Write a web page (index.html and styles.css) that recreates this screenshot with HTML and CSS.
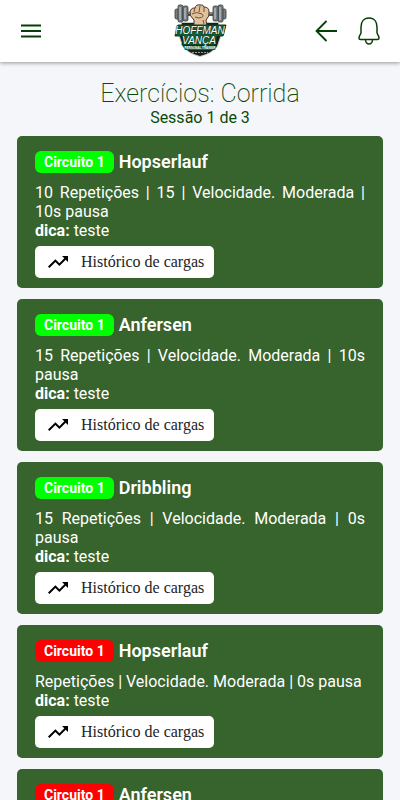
FILE: index.html
```html
<!DOCTYPE html>
<html lang="pt-BR">
<head>
<meta charset="utf-8">
<meta name="viewport" content="width=device-width, initial-scale=1">
<title>Exercícios: Corrida</title>
<link rel="stylesheet" href="styles.css">
</head>
<body>
<svg class="defs" aria-hidden="true">
  <symbol id="trend" viewBox="0 0 24 24"><path d="M16 6l2.29 2.29-4.88 4.88-4-4L2 16.59 3.41 18l6-6 4 4 6.3-6.29L22 12V6z" fill="currentColor"/></symbol>
</svg>
<header class="topbar">
  <div class="side">
    <button class="icon-button" type="button" aria-label="Menu">
      <svg width="24" height="24" viewBox="0 0 24 24" fill="none" stroke="currentColor" stroke-width="2"><path d="M2 6.500h20M2 12h20M2 17.500h20"/></svg>
    </button>
  </div>
  <svg class="logo" viewBox="0 0 56 56" role="img" aria-label="Hoffman Vança Personal Trainer">
    <path d="M10 20H46L48 34L45 43Q40 50 28 53Q16 50 11 43L8 34Z" fill="#17201b" stroke="#c9cecb" stroke-width="2"/>
    <path d="M10 20H46L48 34L45 43Q40 50 28 53Q16 50 11 43L8 34Z" fill="#17201b"/>
    <path d="M7 11h42" stroke="#555" stroke-width="4"/>
    <path d="M8 10h40" stroke="#bbb" stroke-width="1"/>
    <g fill="#777d80" stroke="#34393b" stroke-width=".8">
      <rect x="3" y="6" width="4" height="10" rx="1.500"/><rect x="6" y="2" width="5" height="17" rx="1.500"/><rect x="11" y="3" width="5" height="15" rx="1.500"/>
      <rect x="50" y="6" width="4" height="10" rx="1.500"/><rect x="46" y="2" width="5" height="17" rx="1.500"/><rect x="41" y="3" width="5" height="15" rx="1.500"/>
    </g>
    <path d="M8 4v13M13 5v11M43 5v11M48 4v13" stroke="#d2d6d7"/>
    <path d="M22 23L22 17Q17 13 18 8Q20 4 23 5Q24 1 28 2Q31 1 32 4Q37 4 37 9Q38 13 34 17L35 23Z" fill="#dfc19c" stroke="#4c3424"/>
    <path d="M23 5L22 9M28 3L27 9M32 4L32 9M20 11Q24 8 30 11Q33 14 27 15L23 14M31 17L32 21" fill="none" stroke="#735039"/>
    <path d="M6 22H54L51 33H45L43 42H10L12 33H3Z" fill="#155f37" stroke="#0c3a22"/>
    <text class="logo-name" x="28" y="31" text-anchor="middle">HOFFMAN</text>
    <text class="logo-name" x="27" y="41" text-anchor="middle">VANÇA</text>
    <path d="M11 43H45L43 47H13Z" fill="#12683b"/>
    <text class="logo-small" x="28" y="46" text-anchor="middle">PERSONAL TRAINER</text>
    <path d="M20 49.500H36" stroke="#9aa09c" stroke-dasharray="2 1"/>
  </svg>
  <div class="side side-end">
    <button class="icon-button" type="button" aria-label="Voltar">
      <svg width="24" height="24" viewBox="0 0 24 24" fill="none" stroke="currentColor" stroke-width="1.800"><path d="M12.500 2L2.500 12l10 10M2.500 12H23"/></svg>
    </button>
    <button class="icon-button" type="button" aria-label="Notificações">
      <svg width="24" height="30" viewBox="0 0 24 30" fill="none" stroke="currentColor" stroke-width="1.500" stroke-linejoin="round"><path d="M12 2C6.500 2 4 6 4 11v5.500c0 2-2 3-2 5.500 0 1 .5 1.500 1.500 1.500h17c1 0 1.500-.5 1.500-1.500 0-2.500-2-3.500-2-5.500V11c0-5-2.500-9-8-9zM8.500 23.500c0 2.500 1.500 4.500 3.500 4.500s3.500-2 3.500-4.500"/></svg>
    </button>
  </div>
</header>
<main class="content">
  <h1 class="title">Exercícios: Corrida</h1>
  <p class="session">Sessão 1 de 3</p>
  <div class="cards">
    <article class="card">
      <h2 class="card-title"><span class="badge done">Circuito 1</span>Hopserlauf</h2>
      <p class="details">10 Repetições | 15 | Velocidade. Moderada | 10s pausa</p>
      <p class="details"><b>dica:</b> teste</p>
      <button class="history" type="button"><svg class="trend"><use href="#trend"/></svg>Histórico de cargas</button>
    </article>
    <article class="card">
      <h2 class="card-title"><span class="badge done">Circuito 1</span>Anfersen</h2>
      <p class="details">15 Repetições | Velocidade. Moderada | 10s pausa</p>
      <p class="details"><b>dica:</b> teste</p>
      <button class="history" type="button"><svg class="trend"><use href="#trend"/></svg>Histórico de cargas</button>
    </article>
    <article class="card">
      <h2 class="card-title"><span class="badge done">Circuito 1</span>Dribbling</h2>
      <p class="details">15 Repetições | Velocidade. Moderada | 0s pausa</p>
      <p class="details"><b>dica:</b> teste</p>
      <button class="history" type="button"><svg class="trend"><use href="#trend"/></svg>Histórico de cargas</button>
    </article>
    <article class="card">
      <h2 class="card-title"><span class="badge pending">Circuito 1</span>Hopserlauf</h2>
      <p class="details">Repetições | Velocidade. Moderada | 0s pausa</p>
      <p class="details"><b>dica:</b> teste</p>
      <button class="history" type="button"><svg class="trend"><use href="#trend"/></svg>Histórico de cargas</button>
    </article>
    <article class="card">
      <h2 class="card-title"><span class="badge pending">Circuito 1</span>Anfersen</h2>
    </article>
  </div>
</main>
</body>
</html>
```
FILE: styles.css
```css
* { box-sizing: border-box; }
body {
  margin: 0;
  background: #f5f6fa;
  color: #0b4a0b;
  font: 16px/19px Roboto, sans-serif;
}
h1, h2, p { margin: 0; }
.defs { position: absolute; width: 0; height: 0; }
.topbar {
  display: flex;
  align-items: center;
  height: 62px;
  padding: 0 19px;
  background: #fff;
  box-shadow: 0 1px 4px rgba(0, 0, 0, .4);
}
.side { display: flex; flex: 1; align-items: center; }
.side-end { justify-content: flex-end; gap: 19px; }
.icon-button {
  display: flex;
  padding: 0;
  border: 0;
  background: none;
  color: #063f06;
}
.logo { width: 56px; height: 56px; }
.logo-name {
  fill: #fff;
  stroke: #0c3a22;
  stroke-width: 1px;
  paint-order: stroke;
  font: italic 10px "Liberation Sans", sans-serif;
}
.logo-small { fill: #fff; font: 700 3px "Liberation Sans", sans-serif; }
.content { padding: 18px 17px 0; text-align: center; }
.title { font-size: 25px; font-weight: 200; line-height: 28px; }
.cards {
  display: flex;
  flex-direction: column;
  gap: 11px;
  margin-top: 9px;
  text-align: left;
}
.card {
  padding: 15px 18px 10px;
  border-radius: 5px;
  background: #37632d;
  color: #fff;
}
.card-title {
  display: flex;
  align-items: center;
  gap: 5px;
  margin-bottom: 10px;
  font-size: 18px;
  font-weight: 600;
  line-height: 22px;
}
.badge {
  padding: 0 9px;
  border-radius: 6px;
  font-size: 14px;
  font-weight: 700;
}
.done { background: #0f0; }
.pending { background: #f00; }
.details { text-align: justify; }
.history {
  display: flex;
  align-items: center;
  gap: 11px;
  margin-top: 6px;
  height: 32px;
  padding: 0 10px 0 11px;
  border: 0;
  border-radius: 5px;
  background: #fff;
  color: #222;
  font: 16px "Liberation Serif", serif;
}
.trend { width: 24px; height: 24px; color: #000; }
```
